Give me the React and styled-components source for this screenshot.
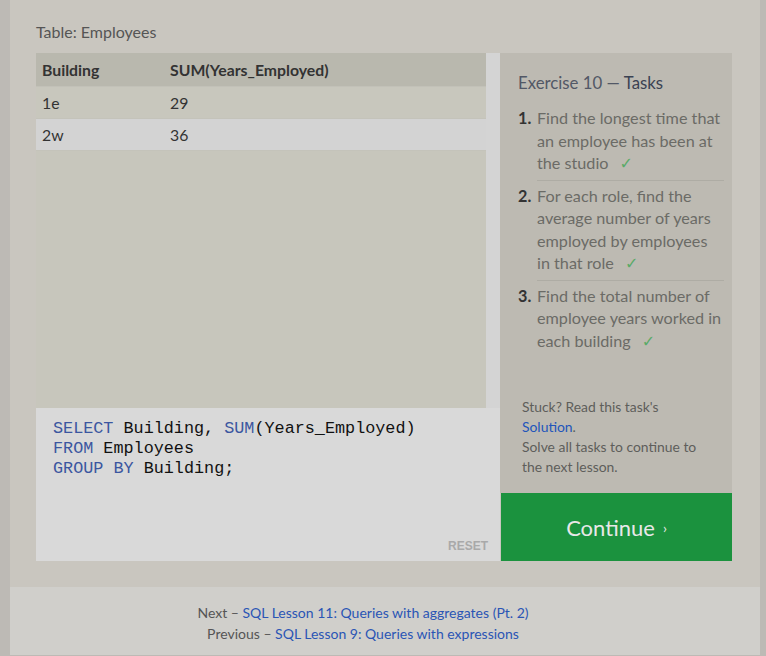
import styled, { createGlobalStyle } from 'styled-components';

const GlobalStyle = createGlobalStyle`
  html, body {
    margin: 0;
    padding: 0;
    background: #bdbab5;
  }
  body {
    font-family: Lato, "Open Sans", sans-serif;
  }
`;

const Page = styled.div`
  width: 750px;
  margin-left: 10px;
  display: flex;
  flex-direction: column;
`;

const Main = styled.main`
  background: #c9c6bf;
  padding: 22px 28px 26px 26px;
`;

const Caption = styled.div`
  font-size: 16px;
  line-height: 20px;
  color: #555;
  margin-bottom: 11px;
`;

const Workspace = styled.div`
  display: grid;
  grid-template-columns: 464px 232px;
  height: 508px;
`;

const LeftColumn = styled.div`
  display: flex;
  flex-direction: column;
`;

const TableArea = styled.div`
  display: flex;
  height: 355px;
`;

const TableBox = styled.div`
  flex: 1;
  background: #c7c6bc;
`;

const Scrollbar = styled.div`
  width: 14px;
  background: #d4d4d4;
`;

const Row = styled.div`
  display: grid;
  grid-template-columns: 128px 1fr;
  height: ${p => (p.$head ? 34 : 32)}px;
  align-items: center;
  padding-left: 6px;
  box-sizing: border-box;
  background: ${p => (p.$head ? '#b9b8ae' : p.$alt ? '#d3d3d3' : '#c8c7bd')};
  border-bottom: 1px solid ${p => (p.$head ? '#c2c1b8' : '#c4c3ba')};
  font-size: 15.8px;
  font-weight: ${p => (p.$head ? 700 : 400)};
  color: #333;
`;

const Editor = styled.div`
  flex: 1;
  background: #d9d9d9;
  padding: 11px 12px 8px 17px;
  display: flex;
  flex-direction: column;
`;

const Code = styled.pre`
  margin: 0;
  font-family: "Liberation Mono", monospace;
  font-size: 16.8px;
  line-height: 20px;
  color: #111;
`;

const Kw = styled.span`
  color: #3b56a0;
`;

const Reset = styled.div`
  margin-top: auto;
  align-self: flex-end;
  font-family: "Liberation Sans", sans-serif;
  font-size: 12px;
  font-weight: 700;
  color: #a9a9a9;
`;

const RightColumn = styled.div`
  display: flex;
  flex-direction: column;
`;

const TaskPanel = styled.div`
  flex: 1;
  background: #bdbab2;
  padding: 20px 8px 16px 18px;
  display: flex;
  flex-direction: column;
`;

const Title = styled.h2`
  margin: 0 0 10px;
  font-size: 16.8px;
  line-height: 20px;
  font-weight: 400;
  color: #525866;
  span {
    color: #3b4252;
  }
`;

const TaskList = styled.ol`
  margin: 0;
  padding: 0;
  list-style: none;
`;

const Task = styled.li`
  display: flex;
  font-size: 16.2px;
  line-height: 22.5px;
  color: #6b6b66;
`;

const Num = styled.span`
  width: 19px;
  flex: none;
  font-weight: 700;
  color: #333;
  padding-top: 4px;
`;

const TaskText = styled.div`
  flex: 1;
  padding: 4px 0 5px;
  white-space: nowrap;
  border-bottom: 1px solid ${p => (p.$last ? 'transparent' : '#aeaca4')};
`;

const Check = styled.span`
  display: inline-block;
  font-family: "DejaVu Sans", sans-serif;
  font-size: 16px;
  line-height: 1;
  color: #5aaa68;
  margin-left: 11px;
`;

const Stuck = styled.div`
  margin-top: auto;
  padding-left: 4px;
  font-size: 13.9px;
  line-height: 20px;
  color: #5e5e5b;
  white-space: nowrap;
  a {
    color: #2255bb;
    text-decoration: none;
  }
`;

const ContinueButton = styled.button`
  height: 68px;
  border: none;
  background: #1b923e;
  color: #e8e8e8;
  font-family: Lato, "Open Sans", sans-serif;
  font-size: 22px;
  display: flex;
  align-items: center;
  justify-content: center;
  gap: 8px;
  padding: 0;
  margin-left: 1px;
  cursor: pointer;
  small {
    font-size: 14px;
  }
`;

const Footer = styled.footer`
  background: #d0cfcb;
  height: 68px;
  padding: 15px 44px 0 0;
  box-sizing: border-box;
  text-align: center;
  font-size: 14px;
  line-height: 21px;
  color: #555;
  a {
    color: #2a55b5;
    text-decoration: none;
  }
`;

const tasks = [
  ['Find the longest time that', 'an employee has been at', 'the studio'],
  ['For each role, find the', 'average number of years', 'employed by employees', 'in that role'],
  ['Find the total number of', 'employee years worked in', 'each building'],
];

const rows = [
  ['1e', '29'],
  ['2w', '36'],
];

export default function App() {
  return (
    <>
      <GlobalStyle />
      <Page>
        <Main>
          <Caption>Table: Employees</Caption>
          <Workspace>
            <LeftColumn>
              <TableArea>
                <TableBox>
                  <Row $head>
                    <span>Building</span>
                    <span>SUM(Years_Employed)</span>
                  </Row>
                  {rows.map((r, i) => (
                    <Row key={r[0]} $alt={i % 2 === 1}>
                      <span>{r[0]}</span>
                      <span>{r[1]}</span>
                    </Row>
                  ))}
                </TableBox>
                <Scrollbar />
              </TableArea>
              <Editor>
                <Code>
                  <Kw>SELECT</Kw> Building, <Kw>SUM</Kw>(Years_Employed){'\n'}
                  <Kw>FROM</Kw> Employees{'\n'}
                  <Kw>GROUP BY</Kw> Building;
                </Code>
                <Reset>RESET</Reset>
              </Editor>
            </LeftColumn>
            <RightColumn>
              <TaskPanel>
                <Title>
                  Exercise 10 — <span>Tasks</span>
                </Title>
                <TaskList>
                  {tasks.map((lines, i) => (
                    <Task key={lines[0]}>
                      <Num>{i + 1}.</Num>
                      <TaskText $last={i === tasks.length - 1}>
                        {lines.map((l, j) => (
                          <span key={l}>
                            {j > 0 && <br />}
                            {l}
                          </span>
                        ))}
                        <Check>✓</Check>
                      </TaskText>
                    </Task>
                  ))}
                </TaskList>
                <Stuck>
                  Stuck? Read this task's
                  <br />
                  <a href="#">Solution</a>.
                  <br />
                  Solve all tasks to continue to
                  <br />
                  the next lesson.
                </Stuck>
              </TaskPanel>
              <ContinueButton>
                Continue <small>›</small>
              </ContinueButton>
            </RightColumn>
          </Workspace>
        </Main>
        <Footer>
          Next – <a href="#">SQL Lesson 11: Queries with aggregates (Pt. 2)</a>
          <br />
          Previous – <a href="#">SQL Lesson 9: Queries with expressions</a>
        </Footer>
      </Page>
    </>
  );
}
